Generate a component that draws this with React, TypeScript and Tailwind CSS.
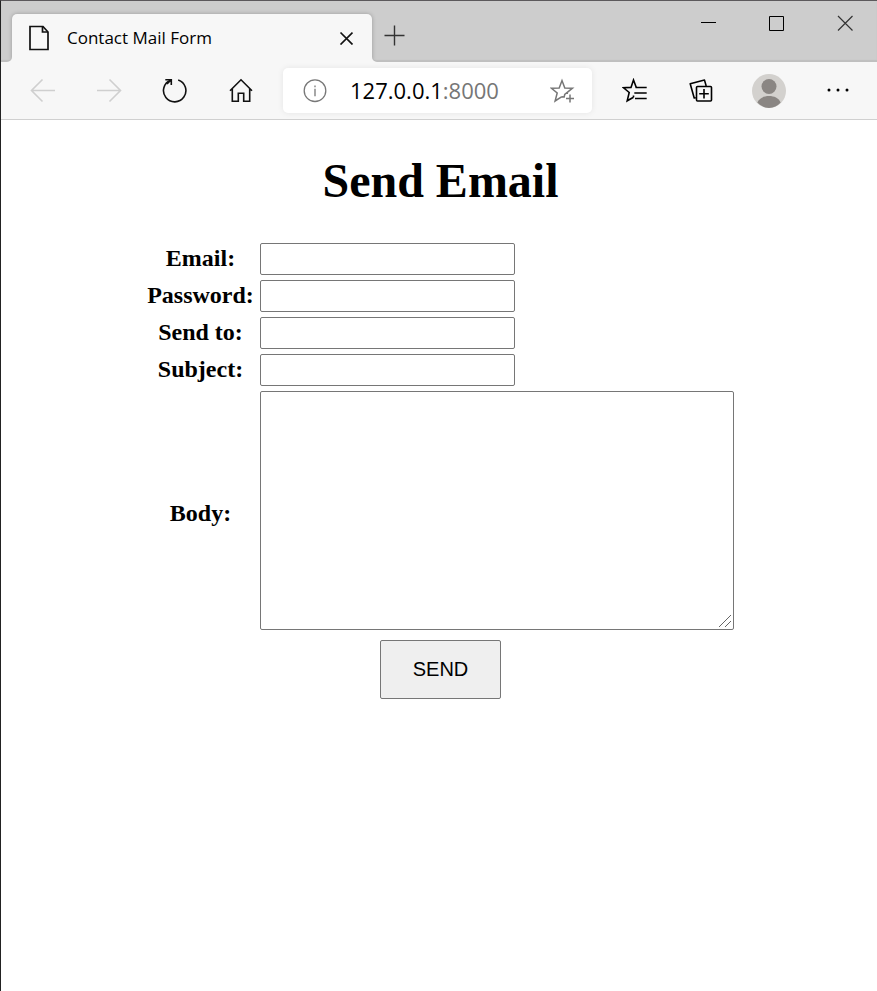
import type { ReactNode } from 'react';

const fields = [
  { id: 'email', label: 'Email:', type: 'email' },
  { id: 'password', label: 'Password:', type: 'password' },
  { id: 'to', label: 'Send to:', type: 'email' },
  { id: 'subject', label: 'Subject:', type: 'text' },
];

function WindowButton({ label, children }: { label: string; children: ReactNode }) {
  return (
    <button type="button" aria-label={label} className="flex h-11 w-[68px] items-center justify-center">
      <svg width="16" height="16" viewBox="0 0 16 16" fill="none" stroke="#000">
        {children}
      </svg>
    </button>
  );
}

function ToolButton({ label, className, children }: { label: string; className: string; children: ReactNode }) {
  return (
    <button type="button" aria-label={label} className={`flex h-full shrink-0 items-center justify-center ${className}`}>
      <svg width="26" height="26" viewBox="0 0 26 26" fill="none" stroke="currentColor" strokeWidth="1.6">
        {children}
      </svg>
    </button>
  );
}

function TitleBar() {
  return (
    <header className="flex h-[61px] justify-between bg-[#cdcdcd] shadow-[inset_0_-2px_1px_#bfbfbf]">
      <div className="flex items-end pl-[11px]">
        <div className="relative z-10 flex h-12 w-[360px] items-center rounded-t-[5px] bg-[#f7f7f7] pr-4 pl-4 shadow-[0_0_4px_rgba(0,0,0,0.25)]">
          <svg className="absolute right-full bottom-0" width="5" height="5" viewBox="0 0 5 5">
            <path d="M5 0v5H0a5 5 0 0 0 5-5z" fill="#f7f7f7" />
          </svg>
          <svg className="absolute bottom-0 left-full" width="5" height="5" viewBox="0 0 5 5">
            <path d="M0 0v5h5a5 5 0 0 1-5-5z" fill="#f7f7f7" />
          </svg>
          <svg width="22" height="26" viewBox="0 0 22 26" fill="none" stroke="#111" strokeWidth="1.7">
            <path d="M2 1.5h13l5 5.5v17.500H2z" />
            <path d="M14.500 1.500V7H20" />
          </svg>
          <span className="ml-[17px] flex-1 text-[17px] text-black">Contact Mail Form</span>
          <button type="button" aria-label="Close tab" className="flex size-5 items-center justify-center">
            <svg width="14" height="14" viewBox="0 0 14 14" stroke="#111" strokeWidth="1.7">
              <path d="M1.500 1.500l12 12M13.500 1.500L1.500 13.500" />
            </svg>
          </button>
        </div>
        <button type="button" aria-label="New tab" className="flex h-[54px] w-[45px] items-center justify-center">
          <svg width="21" height="21" viewBox="0 0 21 21" stroke="#333" strokeWidth="1.4">
            <path d="M10.500 .5v20M.5 10.500h20" />
          </svg>
        </button>
      </div>
      <div className="-mr-0.5 flex">
        <WindowButton label="Minimize">
          <path d="M0 7.500h15" />
        </WindowButton>
        <WindowButton label="Maximize">
          <path d="M.5 1.500h14v14H.5z" />
        </WindowButton>
        <WindowButton label="Close">
          <path d="M1 1l14.500 14.500M15.500 1L1 15.500" stroke="#333" strokeWidth="1.2" />
        </WindowButton>
      </div>
    </header>
  );
}

function ToolBar() {
  return (
    <nav className="relative z-20 flex h-[58px] items-center border-b border-[#d0d0d0] bg-[#f7f7f7] pr-2 pl-[9px]">
      <ToolButton label="Back" className="w-[66px] text-[#cfcfcf]">
        <path d="M25 12.500H1.500M12.500 1.500l-11 11 11 11" />
      </ToolButton>
      <ToolButton label="Forward" className="w-[66px] text-[#cfcfcf]">
        <path d="M1 12.500h23.500M13.500 1.500l11 11-11 11" />
      </ToolButton>
      <ToolButton label="Refresh" className="w-[66px] text-[#111]">
        <path d="M8.600 2.200A11.200 11.200 0 1 0 16.200 2" />
        <path d="M3.300 1.700H9.300v5.300M9 2L5 6" />
      </ToolButton>
      <ToolButton label="Home" className="w-[66px] text-[#111]">
        <path d="M2 12.800L13 1.800l11 11M4.300 10.500v12.700h6v-8h5.400v8h6V10.500" />
      </ToolButton>
      <div className="mx-[9px] flex h-[45px] min-w-0 flex-1 items-center rounded-[5px] bg-white pr-4 pl-5 shadow-[0_0_6px_rgba(0,0,0,0.08)]">
        <svg width="24" height="24" viewBox="0 0 24 24" className="shrink-0" fill="none" stroke="#777" strokeWidth="1.300">
          <circle cx="12" cy="11.700" r="10.800" />
          <path d="M12 9.700v7.500" />
          <path d="M12 6.400v1.800" />
        </svg>
        <a href="#send-email" className="ml-[23px] flex-1 text-[22px] text-black">
          127.0.0.1<span className="text-[#767676]">:8000</span>
        </a>
        <button type="button" aria-label="Add to favorites" className="text-[#767676]">
          <svg width="26" height="26" viewBox="0 0 26 26" fill="none" stroke="currentColor" strokeWidth="1.500">
            <path d="M11.900 18.700L5.100 23l2.100-8L1.500 10.200l7.700-.3L12 2.500l2.800 7.400 7.700.3-5.200 4.200-2.600 2.100-.5 2.500-2.300-.3M17.300 14.400v1.600" />
            <path d="M20 16.500v8M16 20.500h8" />
          </svg>
        </button>
      </div>
      <ToolButton label="Favorites" className="w-[67px] text-black">
        <path d="M11.500 19.300L5.200 22.800l2-8.300L1.500 9.800l7.500-.4L11.500 2l2.700 7.200M11.500 19.300V17.500" />
        <path d="M13.500 9.500h11.200M12.300 15h12.400M13 20.500h11.700" />
      </ToolButton>
      <ToolButton label="Collections" className="w-[67px] text-black">
        <path d="M6.800 19.700L5.200 20 1.200 5.800 15.500 2.100l1.700 5.900" strokeLinejoin="round" />
        <rect x="7.500" y="8.500" width="15" height="14.500" rx="1" />
        <path d="M15 11v9.500M10.200 15.700h9.600" />
      </ToolButton>
      <button type="button" aria-label="Profile" className="flex w-[67px] shrink-0 items-center justify-center">
        <svg width="34" height="34" viewBox="0 0 34 34">
          <circle cx="17" cy="17" r="17" fill="#d3d1ce" />
          <circle cx="17" cy="12.500" r="7.500" fill="#8a8683" />
          <path d="M5.300 28.500C7.500 24 11.700 22 17 22s9.500 2 11.700 6.500A17 17 0 0 1 17 34 17 17 0 0 1 5.300 28.500z" fill="#8a8683" />
        </svg>
      </button>
      <ToolButton label="Settings and more" className="w-[67px] text-black">
        <g fill="currentColor" stroke="none">
          <circle cx="6" cy="12" r="1.500" />
          <circle cx="15" cy="12" r="1.500" />
          <circle cx="24" cy="12" r="1.500" />
        </g>
      </ToolButton>
    </nav>
  );
}

function MailForm() {
  return (
    <form className="flex flex-col items-center font-['Liberation_Serif',serif]" onSubmit={(e) => e.preventDefault()}>
      <table className="border-separate border-spacing-x-[6px] border-spacing-y-[5px]">
        <tbody>
          {fields.map(({ id, label, type }) => (
            <tr key={id}>
              <th scope="row" className="p-0 pb-0.5 text-2xl leading-[30px] font-bold">
                <label htmlFor={id} className="block">{label}</label>
              </th>
              <td className="p-0">
                <input id={id} type={type} className="block h-8 w-[255px] rounded-[2px] border border-[#767676] bg-white px-1 text-xl" />
              </td>
            </tr>
          ))}
          <tr>
            <th scope="row" className="p-0 text-2xl leading-[30px] font-bold">
              <label htmlFor="body" className="block">Body:</label>
            </th>
            <td className="p-0 pb-[5px]">
              <div className="relative">
                <textarea id="body" className="block h-[239px] w-[474px] resize-none rounded-[2px] border border-[#767676] bg-white p-1 text-xl" />
                <svg className="pointer-events-none absolute right-[3px] bottom-[3px]" width="12" height="12" viewBox="0 0 12 12" stroke="#666">
                  <path d="M0 12L12 0M6 12l6-6" />
                </svg>
              </div>
            </td>
          </tr>
        </tbody>
      </table>
      <button type="submit" className="h-[59px] w-[121px] rounded-[2px] border border-[#767676] bg-[#efefef] pb-0.5 font-['Liberation_Sans',Arial,sans-serif] text-xl text-black">
        SEND
      </button>
    </form>
  );
}

export default function App() {
  return (
    <div className="min-h-screen overflow-x-clip border-t border-l border-t-[#5c595c] border-l-[#222] bg-white font-['Open_Sans','Noto_Sans',sans-serif]">
      <TitleBar />
      <ToolBar />
      <main id="send-email" className="pt-[33px] pl-[3px] text-black">
        <h1 className="mb-[29px] text-center font-['Liberation_Serif',serif] text-5xl leading-14 font-bold">Send Email</h1>
        <MailForm />
      </main>
    </div>
  );
}
